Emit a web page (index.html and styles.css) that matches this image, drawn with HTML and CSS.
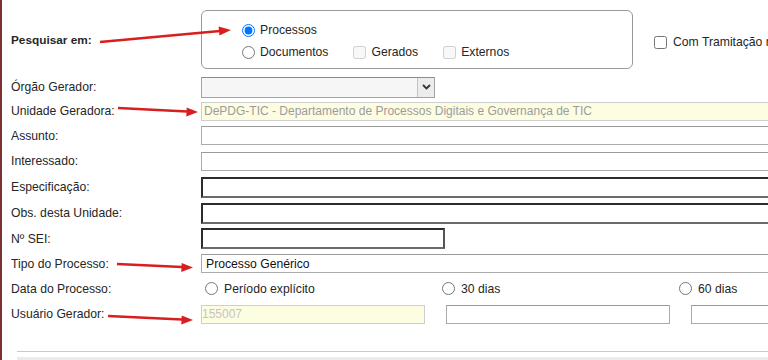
FILE: index.html
```html
<!DOCTYPE html>
<html lang="pt-BR">
<head>
    <meta charset="UTF-8">
    <meta name="viewport" content="width=device-width, initial-scale=1.0">
    <title>Pesquisa</title>
    <link rel="stylesheet" href="styles.css">
</head>
<body>

<section class="page">
    <!-- Pesquisar em -->
    <div class="search-row">
        <label class="search-label">Pesquisar em:</label>
        <div class="scope-box">
            <div class="scope-line">
                <input type="radio" name="scope" id="optProcessos" checked>
                <label for="optProcessos">Processos</label>
            </div>
            <div class="scope-line">
                <input type="radio" name="scope" id="optDocumentos">
                <label for="optDocumentos">Documentos</label>
                <input type="checkbox" id="chkGerados" class="sub-check" disabled>
                <label for="chkGerados">Gerados</label>
                <input type="checkbox" id="chkExternos" class="sub-check" disabled>
                <label for="chkExternos">Externos</label>
            </div>
        </div>
        <div class="tramitacao">
            <input type="checkbox" id="chkTramitacao">
            <label for="chkTramitacao">Com Tramitação no Órgão</label>
        </div>
    </div>

    <!-- Campos -->
    <div class="fields">
        <label>Órgão Gerador:</label>
        <div class="fake-select">
            <span class="select-btn">
                <svg width="9" height="6" viewBox="0 0 9 6"><path d="M1 1 L4.5 4.5 L8 1" fill="none" stroke="#333" stroke-width="1.8"/></svg>
            </span>
        </div>

        <label>Unidade Geradora:</label>
        <input type="text" class="text-input wide filled" value="DePDG-TIC - Departamento de Processos Digitais e Governança de TIC">

        <label>Assunto:</label>
        <input type="text" class="text-input wide">

        <label>Interessado:</label>
        <input type="text" class="text-input wide">

        <label>Especificação:</label>
        <input type="text" class="text-input wide strong">

        <label>Obs. desta Unidade:</label>
        <input type="text" class="text-input wide strong">

        <label>Nº SEI:</label>
        <input type="text" class="text-input sei strong">

        <label>Tipo do Processo:</label>
        <input type="text" class="text-input wide dark-text" value="Processo Genérico">

        <label>Data do Processo:</label>
        <div class="date-options">
            <div class="date-opt">
                <input type="radio" name="periodo" id="perExplicito">
                <label for="perExplicito">Período explícito</label>
            </div>
            <div class="date-opt">
                <input type="radio" name="periodo" id="per30">
                <label for="per30">30 dias</label>
            </div>
            <div class="date-opt">
                <input type="radio" name="periodo" id="per60">
                <label for="per60">60 dias</label>
            </div>
        </div>

        <label>Usuário Gerador:</label>
        <div class="user-fields">
            <input type="text" class="text-input filled faint" value="155007">
            <input type="text" class="text-input">
            <input type="text" class="text-input">
        </div>
    </div>

    <div class="footer-rule"></div>
    <div class="footer-band"></div>
</section>

<!-- setas de destaque -->
<svg class="arrows" width="768" height="360" viewBox="0 0 768 360">
    <g stroke="#d81e1e" stroke-width="2.6" fill="none">
        <line x1="100" y1="42" x2="220" y2="31"/>
        <line x1="118" y1="108" x2="187" y2="111.5"/>
        <line x1="117" y1="264" x2="182" y2="267"/>
        <line x1="108" y1="316" x2="182" y2="319.5"/>
    </g>
    <g fill="#d81e1e">
        <polygon points="231,30 219.5,35.6 218.6,26.6"/>
        <polygon points="198,112 186.3,116.4 186.7,107.4"/>
        <polygon points="193,267.5 181.3,272 181.7,263"/>
        <polygon points="193,320 181.3,324.4 181.7,315.4"/>
    </g>
</svg>

</body>
</html>
```

FILE: styles.css
```css
body {
    margin: 0;
    padding: 0;
    width: 768px;
    height: 360px;
    overflow: hidden;
    font-family: 'Liberation Sans', Arial, sans-serif;
    font-size: 12.2px;
    color: #262626;
    background-color: #ffffff;
    position: relative;
}

.page {
    border-left: 2px solid #7a3232;
    padding-left: 9px;
    min-height: 360px;
    box-sizing: border-box;
}

input[type="radio"],
input[type="checkbox"] {
    width: 13px;
    height: 13px;
    margin: 0;
    flex: none;
}

/* Pesquisar em */
.search-row {
    display: flex;
    align-items: flex-start;
    padding-top: 10px;
    height: 65px;
    box-sizing: border-box;
}

.search-label {
    flex: none;
    width: 190px;
    font-weight: bold;
    font-size: 11.8px;
    margin-top: 23px;
}

.scope-box {
    flex: none;
    width: 432px;
    height: 59px;
    box-sizing: border-box;
    border: 1px solid #999;
    border-radius: 6px;
    padding: 8px 0 0 40px;
}

.scope-line {
    display: flex;
    align-items: center;
    height: 22px;
}

.scope-line label {
    margin-left: 5px;
}

.scope-line .sub-check {
    margin-left: 25px;
}

.tramitacao {
    flex: none;
    display: flex;
    align-items: center;
    margin-left: 21px;
    margin-top: 25px;
    white-space: nowrap;
}

.tramitacao label {
    margin-left: 6px;
}

/* Campos */
.fields {
    display: grid;
    grid-template-columns: 190px 1fr;
    grid-template-rows: 24px 24px 25px 26px 26px 26px 25px 25px 25px 26px;
    align-items: center;
    margin-top: 10px;
}

.fake-select {
    width: 234px;
    height: 21px;
    box-sizing: border-box;
    border: 1px solid #a4a4a4;
    border-top-color: #8c8c8c;
    background-color: #f6f6f6;
    display: flex;
    justify-content: flex-end;
}

.select-btn {
    width: 16px;
    border-left: 1px solid #c4c4c4;
    background-color: #ececec;
    display: flex;
    align-items: center;
    justify-content: center;
}

.text-input {
    height: 19px;
    box-sizing: border-box;
    border: 1px solid #ababab;
    border-top-color: #9a9a9a;
    padding: 0 3px;
    font-family: 'Liberation Sans', Arial, sans-serif;
    font-size: 12.2px;
    color: #222;
    background-color: #ffffff;
    outline: none;
}

.text-input.wide {
    width: 600px;
}

.text-input.sei {
    width: 244px;
    height: 21px;
}

.text-input.strong {
    border: 2px solid #2c2c2c;
    border-bottom-color: #6a6a6a;
    border-right-color: #555;
    height: 21px;
}

.text-input.filled {
    background-color: #fdfde2;
    border-color: #cfcfcf;
    color: #9c9c9c;
    font-size: 12px;
    padding-left: 2px;
}

.text-input.faint {
    color: #c4c4c4;
    padding-left: 0;
}

.text-input.dark-text {
    color: #111;
    padding-left: 4px;
}

.date-options {
    display: grid;
    grid-template-columns: 237px 237px 1fr;
    padding-left: 4px;
}

.date-opt {
    display: flex;
    align-items: center;
}

.date-opt label {
    margin-left: 6px;
}

.user-fields {
    display: grid;
    grid-template-columns: 224px 224px 224px;
    gap: 21px;
}

.user-fields .text-input {
    width: 100%;
}

/* Rodapé */
.footer-rule {
    margin: 24px 0 0 6px;
    border-top: 1px solid #c9c9c9;
}

.footer-band {
    margin: 5px 0 0 6px;
    height: 10px;
    background-color: #ebebeb;
}

/* setas sobre o conteúdo */
.arrows {
    position: absolute;
    left: 0;
    top: 0;
    pointer-events: none;
}
```
